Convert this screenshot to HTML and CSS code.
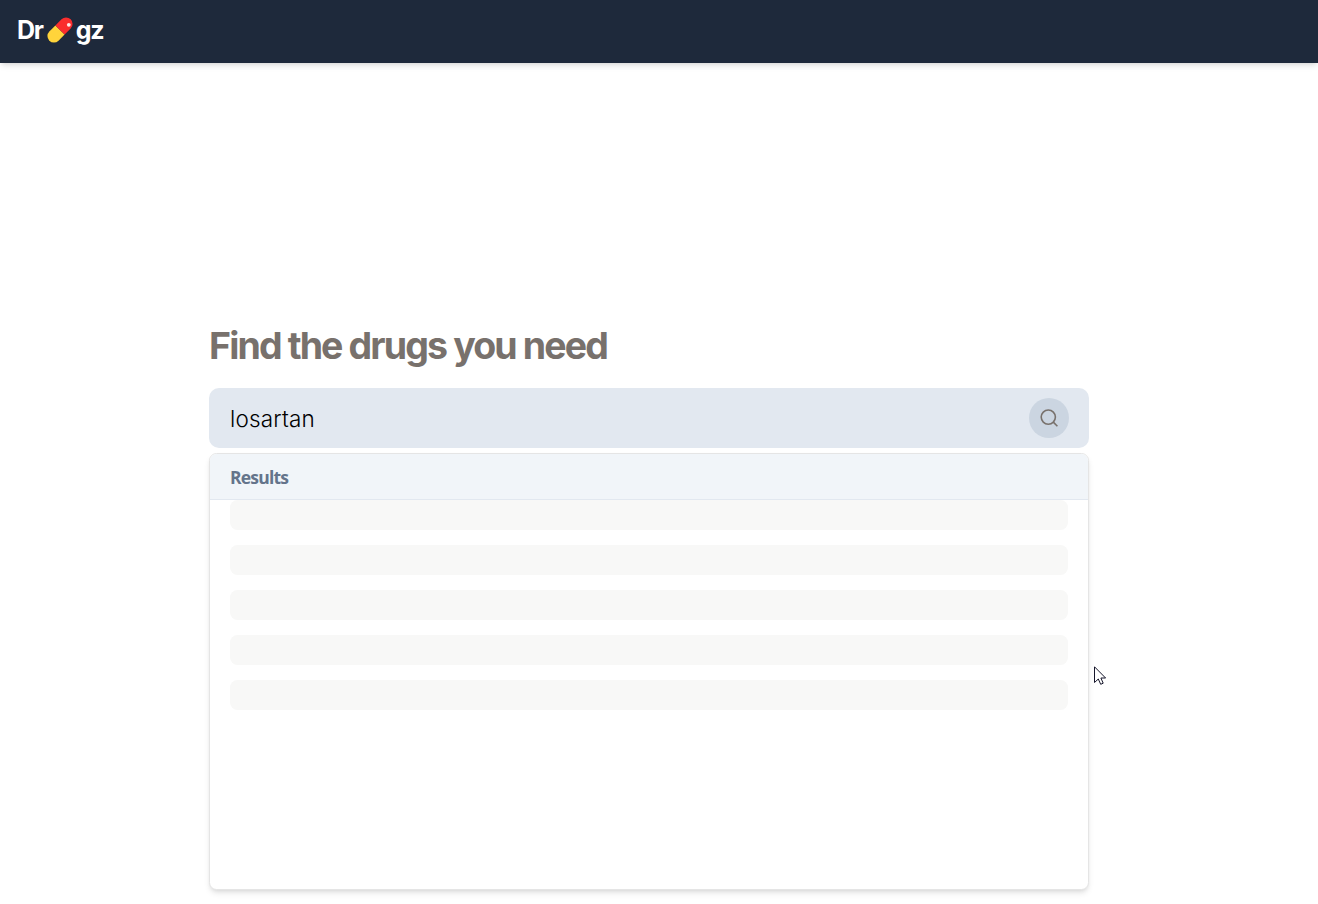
FILE: index.html
```html
<!DOCTYPE html>
<html lang="en">
<head>
<meta charset="utf-8">
<title>Drugz</title>
<link rel="stylesheet" href="styles.css">
</head>
<body>
<header class="navbar">
  <div class="logo">
    <span class="logo-start">Dr</span>
    <svg class="pill" width="26" height="26" viewBox="0 0 26 26" aria-hidden="true">
      <g transform="rotate(-45 13 13)">
        <path d="M13 6.5H4.4a6.5 6.5 0 0 0 0 13H13z" fill="#ffd43b"/>
        <path d="M13 6.5h8.6a6.5 6.5 0 0 1 0 13H13z" fill="#fa2d2d"/>
      </g>
      <circle cx="21.8" cy="7.8" r="1.9" fill="#ffe9e9"/>
    </svg>
    <span class="logo-end">gz</span>
  </div>
</header>
<main class="content">
  <h1 class="title">Find the drugs you need</h1>
  <div class="search">
    <span class="query">losartan</span>
    <button class="search-button" aria-label="Search">
      <svg width="20" height="20" viewBox="0 0 20 20" fill="none" stroke="#78716c" stroke-width="1.6">
        <circle cx="9.3" cy="9.1" r="7.1"/>
        <path d="M14.3 14.1L18.4 18.2"/>
      </svg>
    </button>
  </div>
  <section class="results">
    <h2 class="results-title">Results</h2>
    <div class="skeletons">
      <div class="skeleton"></div>
      <div class="skeleton"></div>
      <div class="skeleton"></div>
      <div class="skeleton"></div>
      <div class="skeleton"></div>
    </div>
  </section>
</main>
<svg class="cursor" width="13" height="20" viewBox="0 0 13 20" aria-hidden="true">
  <path d="M.5 .8V16.5L4.3 13L6.7 18.3L9.2 17.2L6.9 12H11.6z" fill="#fff" stroke="#15152a" stroke-width="1"/>
</svg>
</body>
</html>
```

FILE: styles.css
```css
* { box-sizing: border-box; }
body {
  margin: 0;
  height: 904px;
  overflow: hidden;
  background: #fff;
  font-family: Inter, sans-serif;
}
.navbar {
  height: 63px;
  padding: 0 17px;
  display: flex;
  align-items: center;
  background: #1e293b;
  box-shadow: 0 4px 6px -1px rgba(0,0,0,.1), 0 2px 4px -2px rgba(0,0,0,.1);
}
.logo {
  display: flex;
  align-items: center;
  color: #fff;
  font-size: 25px;
  line-height: 35px;
  font-weight: 700;
  letter-spacing: -1.25px;
  padding-bottom: 3px;
}
.pill { margin: 0 3px 0 4px; }
.content {
  width: 880px;
  margin: 258px 0 0 209px;
}
.title {
  margin: 0 0 17px;
  color: #78716c;
  font-size: 37.5px;
  line-height: 50px;
  font-weight: 700;
  letter-spacing: -1.87px;
  white-space: nowrap;
}
.search {
  height: 60px;
  padding: 0 20px 0 21px;
  display: flex;
  align-items: center;
  justify-content: space-between;
  border-radius: 10px;
  background: #e2e8f0;
}
.query {
  color: #000;
  font-size: 22.5px;
  font-weight: 300;
  letter-spacing: .2px;
  line-height: 30px;
  padding-top: 2px;
}
.search-button {
  width: 40px;
  height: 40px;
  padding: 0;
  display: flex;
  align-items: center;
  justify-content: center;
  border: 0;
  border-radius: 50%;
  background: #cbd5e1;
}
.results {
  height: 437px;
  margin-top: 5px;
  border: 1px solid #e5e5e5;
  border-radius: 7.5px;
  overflow: hidden;
  background: #fff;
  box-shadow: 0 4px 6px -1px rgba(0,0,0,.1), 0 2px 4px -2px rgba(0,0,0,.1);
}
.results-title {
  height: 46px;
  margin: 0;
  padding: 0 20px;
  border-bottom: 1px solid #e2e8f0;
  background: #f1f5f9;
  color: #64748b;
  font: 700 17.5px/47px "Open Sans", sans-serif;
  letter-spacing: -.8px;
}
.skeletons {
  display: grid;
  gap: 15px;
  padding: 0 20px;
}
.skeleton {
  height: 30px;
  border-radius: 7.5px;
  background: #f8f8f7;
}
.cursor {
  position: absolute;
  left: 1094px;
  top: 666px;
}
```
